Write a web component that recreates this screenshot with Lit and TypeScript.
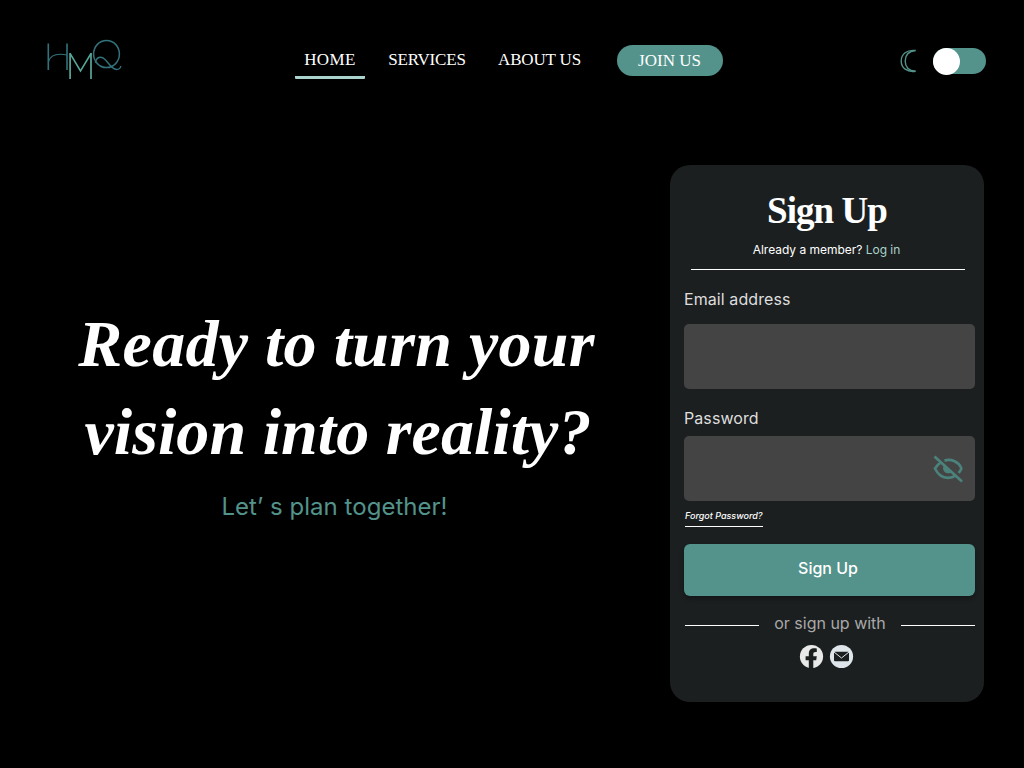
import { LitElement, html, css } from "lit";
import { customElement } from "lit/decorators.js";

@customElement("brand-mark")
class BrandMark extends LitElement {
  static styles = css`
    :host { display: block; width: 76px; height: 42px; }
    svg { display: block; }
  `;
  render() {
    return html`<svg width="76" height="42" viewBox="0 0 76 42" fill="none" role="img" aria-label="HMQ">
      <g stroke="#32727b" stroke-width="1.6">
        <path d="M2.300 4.500v26.500M21 4.500v26.500"/>
        <path d="M2.300 23C4 17 10 13.800 21 16" stroke-width="1.200"/>
        <ellipse cx="60.500" cy="15" rx="12.900" ry="13.600" stroke-width="1.500"/>
        <path d="M49.500 24C50 18 55 16.500 59 20.500c4 4 7 10 11.500 10 2.500 0 4-1.300 4.300-3.500" stroke-width="1.400"/>
      </g>
      <path d="M24.100 40V14M45 40V14" stroke="#57a79a" stroke-width="1.700"/>
      <path d="M24.100 14.500 34.500 32 45 14.500" stroke="#57a79a" stroke-width="1.500"/>
    </svg>`;
  }
}

@customElement("site-header")
class SiteHeader extends LitElement {
  static styles = css`
    :host { display: flex; height: 120px; box-sizing: border-box; padding: 39px 38px 0 46px; align-items: flex-start;
      font-family: "Liberation Serif", serif; font-size: 17px; line-height: 20px; color: #fff; }
    nav { display: flex; margin-left: 173px; }
    .link { width: 70px; height: 40px; box-sizing: border-box; padding-top: 11px; text-align: center; white-space: nowrap; }
    .home { border-bottom: 3px solid #a9d3cc; border-radius: 1px; letter-spacing: .4px; }
    .services { width: 78px; margin-left: 23px; letter-spacing: -.2px; }
    .about { width: 83px; margin-left: 32px; letter-spacing: -.15px; }
    .join { width: 106px; height: 31px; margin: 6px 0 0 36px; padding: 0 1px 0 0; border: 0; border-radius: 16px;
      background: #53938b; color: #fff; font: inherit; line-height: 31px; }
    .theme { display: flex; margin: 8px 0 0 auto; align-items: center; gap: 16px; }
    .switch { width: 53px; height: 26px; border-radius: 13px; background: #53938b; display: flex; align-items: center; }
    .knob { width: 27px; height: 27px; flex: none; border-radius: 50%; background: #fff; }
    .switch { margin-top: 1px; }
    svg { display: block; }
  `;
  render() {
    return html`
      <brand-mark></brand-mark>
      <nav>
        <div class="link home">HOME</div>
        <div class="link services">SERVICES</div>
        <div class="link about">ABOUT US</div>
        <button class="join">JOIN US</button>
      </nav>
      <div class="theme">
        <svg width="17" height="24" viewBox="0 0 17 24" fill="none" stroke="#53938b" stroke-width="1.4">
          <path d="M15.500 1.500C7 .500 1.200 5 1.200 12S7 23.400 15.500 22.300"/>
          <path d="M15.500 1.500C8.500 2.200 5.200 6.500 5.200 12s3.300 9.600 10.300 10.300"/>
        </svg>
        <div class="switch"><div class="knob"></div></div>
      </div>`;
  }
}

@customElement("hero-copy")
class HeroCopy extends LitElement {
  static styles = css`
    :host { display: block; width: 670px; padding-top: 180px; text-align: center; box-sizing: border-box; }
    h1 { margin: 0; font: italic bold 66px/88px "Liberation Serif", serif; color: #fff; white-space: nowrap; }
    .line { display: block; }
    .first { letter-spacing: .27px; padding-left: 3px; }
    .second { letter-spacing: .05px; padding-left: 6px; }
    p { margin: 16px 0 0; padding-right: 1px; font: 24px/30px Inter, sans-serif; color: #53938b; letter-spacing: .03px; }
  `;
  render() {
    return html`
      <h1><span class="line first">Ready to turn your</span><span class="line second">vision into reality?</span></h1>
      <p>Let’ s plan together!</p>`;
  }
}

@customElement("signup-card")
class SignupCard extends LitElement {
  static styles = css`
    :host { display: block; width: 314px; height: 537px; margin-top: 45px; box-sizing: border-box; padding: 24px 9px 0 14px;
      border-radius: 20px; background: #1c1f20; font-family: Inter, sans-serif; color: #fff; }
    h2 { margin: 0; font: bold 37px/44px "Liberation Serif", serif; text-align: center; letter-spacing: -.95px; }
    .title { padding-right: 5px; }
    .member { font-size: 12px; line-height: 16px; margin-top: 9px; padding-right: 6px; text-align: center; letter-spacing: -.02px; }
    .member a { color: #a9d3cc; }
    .rule { height: 1px; margin: 11px 10px 0 7px; background: #fff; }
    label { display: block; font-size: 16px; line-height: 20px; color: #dedede; font-weight: 400; letter-spacing: .08px; }
    .email { margin-top: 19px; }
    .field { display: flex; height: 65px; box-sizing: border-box; border-radius: 5px; background: #444; align-items: center; justify-content: flex-end; padding-right: 12px; }
    .email-field { margin-top: 15px; }
    .password { margin-top: 19px; }
    .password-field { margin-top: 8px; padding-top: 1px; }
    .forgot { display: block; width: 78px; height: 17px; margin: 9px 0 0 1px; border-bottom: 1px solid #fff; box-sizing: border-box;
      font-size: 9px; font-style: italic; font-weight: 500; line-height: 11px; white-space: nowrap; }
    .submit { display: block; width: 100%; height: 52px; margin-top: 17px; padding: 0 3px 4px 0; border: 0; border-radius: 6px;
      background: #53938b; box-shadow: 0 3px 4px rgba(0,0,0,.3); color: #fff; font: 500 16px/20px Inter, sans-serif; }
    .or { display: flex; margin: 17px 0 0 1px; align-items: center; justify-content: space-between; color: #a9a9a9; font-size: 16px; line-height: 20px; }
    .or i { width: 74px; height: 1px; background: #fff; margin-top: 5px; }
    .social { display: flex; margin: 11px 0 0 115px; gap: 5px; }
    svg { display: block; }
  `;
  render() {
    return html`
      <h2 class="title">Sign Up</h2>
      <div class="member">Already a member? <a>Log in</a></div>
      <div class="rule"></div>
      <label class="email">Email address</label>
      <div class="field email-field"></div>
      <label class="password">Password</label>
      <div class="field password-field">
        <svg width="30" height="28" viewBox="0 0 30 28" fill="none" stroke="#4b827b" stroke-width="2.7">
          <path d="M11.500 5.600C18 3.500 25 6.500 28 12.500c.400.800.300 1.500-.100 2.200-.600 1.100-1.300 2.200-2.300 3.200"/>
          <path d="M7.300 7.800C4.800 9.300 3.200 11.400 2 13.500c2.600 5.600 7.200 9.300 13 9.300 3 0 5.700-.900 8-2.400"/>
          <path d="M11.600 10.500c-2.400 4.600 1.400 8.300 6 6.600Z" fill="#4b827b" stroke-width="1.500"/>
          <path d="M1.500 1.500 29 26.500"/>
        </svg>
      </div>
      <a class="forgot">Forgot Password?</a>
      <button class="submit">Sign Up</button>
      <div class="or"><i></i><span>or sign up with</span><i></i></div>
      <div class="social">
        <svg width="25" height="25" viewBox="0 0 25 25">
          <circle cx="12.500" cy="12.500" r="11.600" fill="#e9e9e9"/>
          <path fill="#1c1f20" d="M9.800 24.500v-8.300H6.600v-3.900h3.200V9.800c0-3.800 2.200-5.500 5.400-5.500 1.200 0 2.600.200 2.600.200V8h-1.300c-1.600 0-2.200.900-2.200 1.800v2.500h3.500l-.6 3.900h-2.900v8.300Z"/>
        </svg>
        <svg width="25" height="25" viewBox="0 0 25 25">
          <circle cx="12.500" cy="12.500" r="11.600" fill="#dfe6eb"/>
          <rect x="5" y="7.700" width="15" height="9.600" rx="1" fill="#1c1f20"/>
          <path d="m5 8 7.500 6L20 8" fill="none" stroke="#dfe6eb" stroke-width="1"/>
        </svg>
      </div>`;
  }
}

@customElement("app-root")
class AppRoot extends LitElement {
  static styles = css`
    :host { display: block; width: 1024px; height: 768px; overflow: hidden; background: #000; }
    main { display: flex; align-items: flex-start; }
  `;
  render() {
    return html`<site-header></site-header><main><hero-copy></hero-copy><signup-card></signup-card></main>`;
  }
}
